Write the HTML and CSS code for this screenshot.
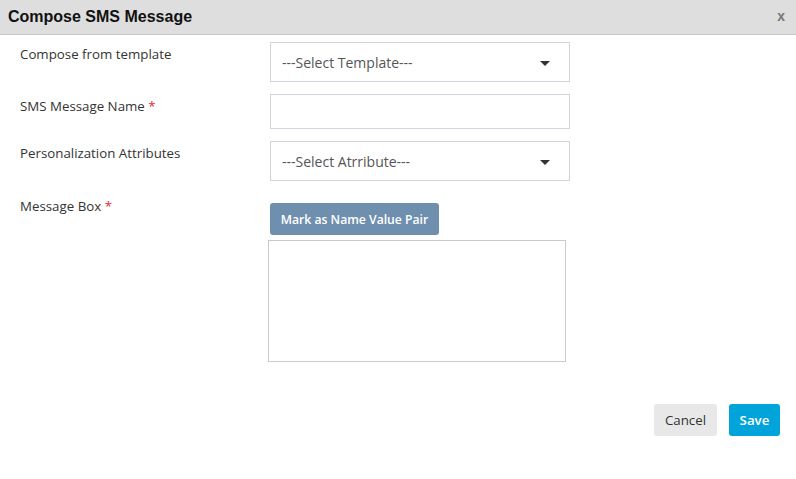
FILE: index.html
```html
<!DOCTYPE html>
<html>
<head>
<meta charset="utf-8">
<link rel="stylesheet" href="styles.css">
</head>
<body>
<div class="modal">
  <div class="modal-header">
    <span class="modal-title">Compose SMS Message</span>
    <span class="close">x</span>
  </div>
  <div class="form">
    <div class="label">Compose from template</div>
    <div class="select"><span>---Select Template---</span><span class="caret"></span></div>

    <div class="label">SMS Message Name <span class="req">*</span></div>
    <div class="input"></div>

    <div class="label">Personalization Attributes</div>
    <div class="select"><span>---Select Atrribute---</span><span class="caret"></span></div>

    <div class="label label-msg">Message Box <span class="req">*</span></div>
    <div class="msg-col">
      <button class="btn-pair">Mark as Name Value Pair</button>
      <div class="textarea"></div>
    </div>
  </div>
  <div class="footer">
    <button class="btn btn-cancel">Cancel</button>
    <button class="btn btn-save">Save</button>
  </div>
</div>
</body>
</html>
```
FILE: styles.css
```css
html, body {
  margin: 0;
  padding: 0;
  background: #fff;
}
body {
  font-family: "Open Sans", "Segoe UI", sans-serif;
  font-size: 13.3px;
  color: #333;
  width: 796px;
  height: 479px;
  overflow: hidden;
}
.modal {
  display: flex;
  flex-direction: column;
}
.modal-header {
  height: 34px;
  background: #dedede;
  border-bottom: 1px solid #c6c6c6;
  display: flex;
  align-items: center;
  justify-content: space-between;
  padding: 0 11px 0 8px;
}
.modal-title {
  font-family: "Liberation Sans", Arial, sans-serif;
  font-weight: bold;
  font-size: 16px;
  color: #111;
}
.close {
  font-family: "Liberation Sans", Arial, sans-serif;
  font-weight: bold;
  font-size: 14px;
  color: #777;
  margin-top: -2px;
}
.form {
  display: grid;
  grid-template-columns: 250px 300px;
  row-gap: 12px;
  padding: 7px 20px 0;
}
.label {
  padding-top: 3px;
  line-height: 18px;
}
.req {
  color: #e0263a;
}
.select, .input {
  box-sizing: border-box;
  border: 1px solid #d2d6dc;
  height: 40px;
  display: flex;
  align-items: center;
  justify-content: space-between;
  padding: 0 19px 0 11px;
  color: #555;
  font-size: 14px;
}
.input {
  height: 35px;
}
.caret {
  width: 0;
  height: 0;
  border-left: 5px solid transparent;
  border-right: 5px solid transparent;
  border-top: 5px solid #333;
  margin-top: 2px;
}
.label-msg {
  margin-top: 4px;
  padding-top: 0;
}
.msg-col {
  margin-top: 10px;
  display: flex;
  flex-direction: column;
  align-items: flex-start;
}
.btn-pair {
  font-family: "Open Sans", "Segoe UI", sans-serif;
  font-size: 12.2px;
  font-weight: 600;
  color: #fff;
  background: #6f8fae;
  border: none;
  border-radius: 3px;
  height: 32px;
  width: 169px;
  padding: 0;
}
.textarea {
  box-sizing: border-box;
  margin: 5px 0 0 -2px;
  width: 298px;
  height: 122px;
  border: 1px solid #cacaca;
}
.footer {
  display: flex;
  justify-content: flex-end;
  gap: 12px;
  padding: 42px 16px 0 0;
}
.btn {
  font-family: "Open Sans", "Segoe UI", sans-serif;
  font-size: 13.3px;
  height: 32px;
  border: none;
  border-radius: 3px;
  padding: 0;
}
.btn-cancel {
  width: 63px;
  background: #e8e8e8;
  color: #333;
}
.btn-save {
  width: 51px;
  background: #00a4db;
  color: #fff;
  font-weight: 600;
}
```
